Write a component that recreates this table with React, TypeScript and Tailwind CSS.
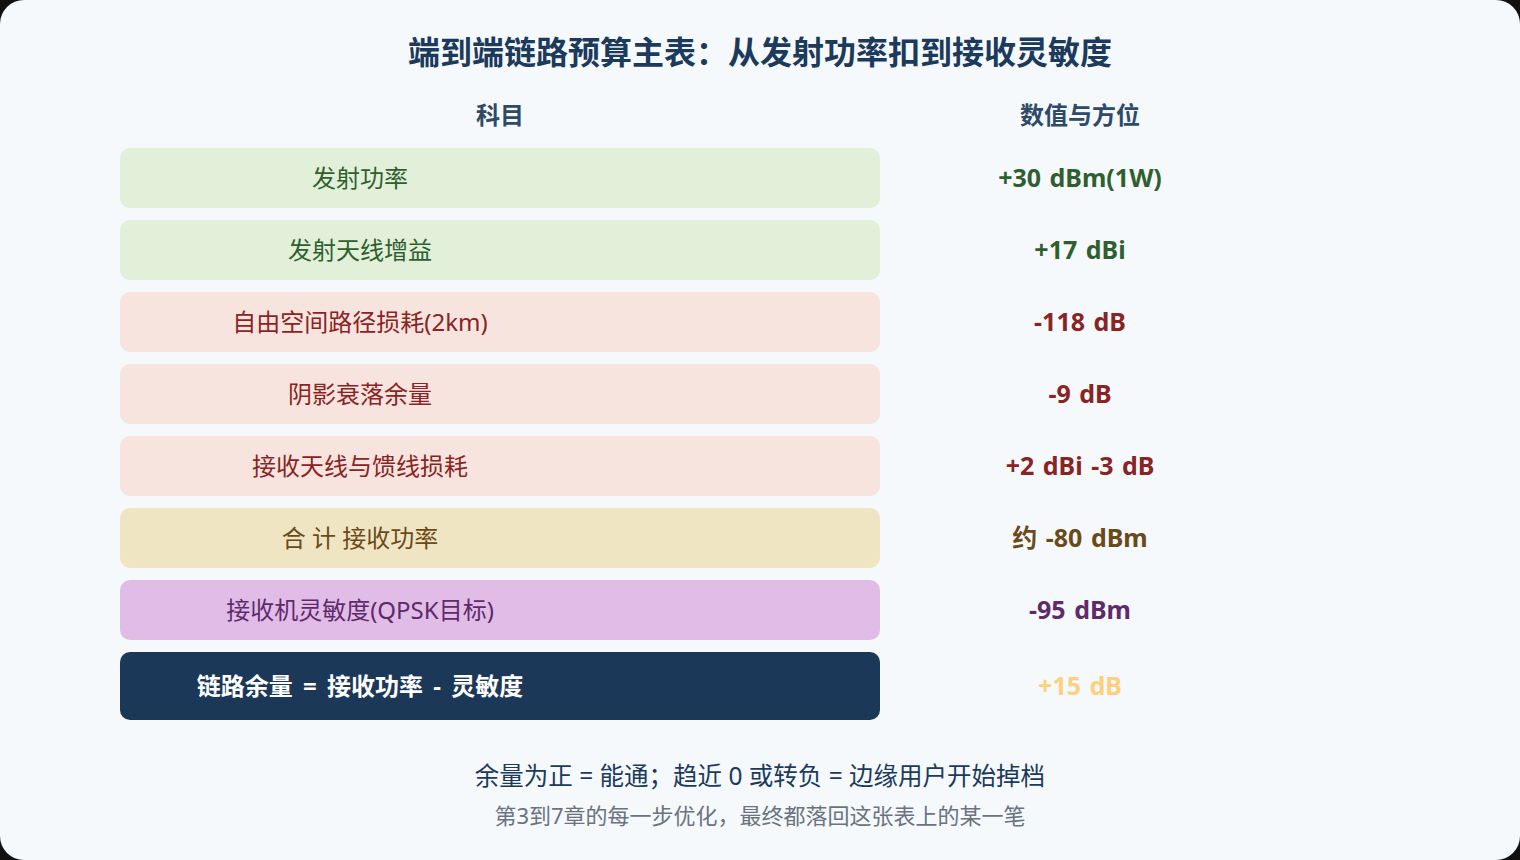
const font = { fontFamily: '"Noto Sans", "Noto Sans CJK SC", sans-serif' }

type Row = {
  label: string
  value: string
  box: string
  labelColor: string
  valueColor: string
}

const rows: Row[] = [
  { label: "发射功率", value: "+30 dBm(1W)", box: "bg-[#e2efd9]", labelColor: "text-[#2f5f2f]", valueColor: "text-[#2f5f2f]" },
  { label: "发射天线增益", value: "+17 dBi", box: "bg-[#e2efd9]", labelColor: "text-[#2f5f2f]", valueColor: "text-[#2f5f2f]" },
  { label: "自由空间路径损耗(2km)", value: "-118 dB", box: "bg-[#f7e4df]", labelColor: "text-[#8a2424]", valueColor: "text-[#8a2424]" },
  { label: "阴影衰落余量", value: "-9 dB", box: "bg-[#f7e4df]", labelColor: "text-[#8a2424]", valueColor: "text-[#8a2424]" },
  { label: "接收天线与馈线损耗", value: "+2 dBi -3 dB", box: "bg-[#f7e4df]", labelColor: "text-[#8a2424]", valueColor: "text-[#8a2424]" },
  { label: "合 计 接收功率", value: "约 -80 dBm", box: "bg-[#f0e5c3]", labelColor: "text-[#6a4a18]", valueColor: "text-[#6a4a18]" },
  { label: "接收机灵敏度(QPSK目标)", value: "-95 dBm", box: "bg-[#e1bce6]", labelColor: "text-[#5e2a6c]", valueColor: "text-[#5e2a6c]" },
]

export default function App() {
  return (
    <div className="w-[1520px] h-[860px] bg-[#111111]" style={font}>
      <div className="w-full h-full rounded-[24px] bg-[#f5f9fc] flex flex-col items-center">
        <h1 className="mt-[32px] text-[32px] leading-[40px] font-bold text-[#1c3a5c]">
          端到端链路预算主表：从发射功率扣到接收灵敏度
        </h1>

        <div className="mt-[28px] w-full pl-[120px] flex flex-col">
          {/* header */}
          <div className="flex h-[30px] items-center text-[24px] font-bold text-[#2e4a68]">
            <div className="w-[760px] text-center">科目</div>
            <div className="w-[400px] text-center">数值与方位</div>
          </div>

          <div className="mt-[18px] flex flex-col gap-[12px]">
            {rows.map((r) => (
              <div key={r.label} className="flex items-center">
                <div className={`w-[760px] h-[60px] rounded-[10px] flex items-center ${r.box}`}>
                  <span className={`w-[480px] text-center text-[24px] ${r.labelColor}`}>{r.label}</span>
                </div>
                <div className={`w-[400px] text-center text-[25px] font-bold [word-spacing:2px] ${r.valueColor}`}>
                  {r.value}
                </div>
              </div>
            ))}

            <div className="flex items-center">
              <div className="w-[760px] h-[68px] rounded-[10px] bg-[#1c3859] flex items-center">
                <span className="w-[480px] text-center text-[24px] font-bold text-white [word-spacing:4px]">
                  链路余量 = 接收功率 - 灵敏度
                </span>
              </div>
              <div className="w-[400px] text-center text-[25px] font-bold text-[#ffd07c] [word-spacing:2px]">+15 dB</div>
            </div>
          </div>
        </div>

        <p className="mt-[38px] text-[24.5px] leading-[36px] text-[#1c3a5c]">
          余量为正 = 能通；趋近 0 或转负 = 边缘用户开始掉档
        </p>
        <p className="mt-[6px] text-[22px] leading-[30px] text-[#6b7380]">
          第3到7章的每一步优化，最终都落回这张表上的某一笔
        </p>
      </div>
    </div>
  )
}
